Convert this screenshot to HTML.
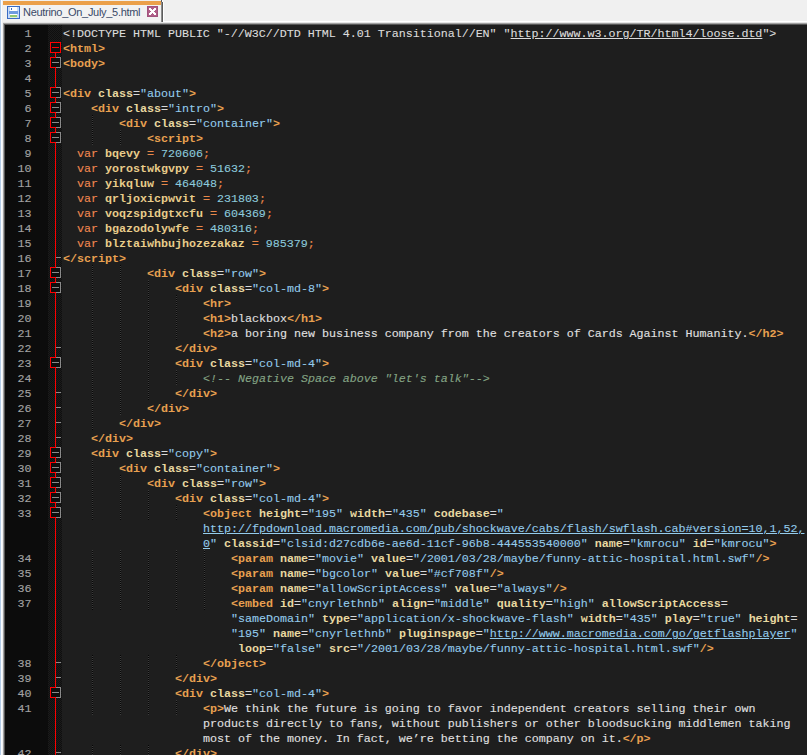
<!DOCTYPE html>
<html><head><meta charset="utf-8"><style>
html,body{margin:0;padding:0}
body{width:807px;height:755px;overflow:hidden;background:#f0f0f0;position:relative;font-family:"Liberation Sans",sans-serif}
.abs{position:absolute}
#ed{position:absolute;left:5px;top:25px;width:802px;height:730px;background:#1e1e1e}
#gut{position:absolute;left:5px;top:25px;width:43px;height:730px;background:#0c0c0c}
#nums{position:absolute;left:5px;top:27px;width:26.5px;-webkit-text-stroke:0.15px;text-align:right;font-family:"Liberation Mono",monospace;font-size:11.7px;letter-spacing:-0.02px;line-height:15px;color:#a2a2a2;white-space:pre}
#code{position:absolute;left:63px;top:27px;width:744px;-webkit-text-stroke:0.1px;font-family:"Liberation Mono",monospace;font-size:11.7px;letter-spacing:-0.02px;line-height:15px;color:#dcdcdc;white-space:pre}
#code div, #nums div{height:15px}
i{font-style:normal}
.dt{color:#dcdcdc}
.txt{color:#e0e0e0}
.tag{color:#e8a050;font-weight:bold;-webkit-text-stroke:0}
.attr{color:#e8d8a0;font-weight:bold;-webkit-text-stroke:0}
.eq{color:#d8d8d8}
.val{color:#94ccec}
.cmt{color:#84a484;font-style:italic}
.kw{color:#f08850}
.id{color:#e8cc8a;font-weight:bold;-webkit-text-stroke:0}
.op{color:#e8884a}
.num{color:#8ccadc}
.u{text-decoration:underline;text-underline-offset:1px}
</style></head><body>
<div class="abs" style="left:0;top:0;width:1px;height:755px;background:#b4cce8"></div>
<div class="abs" style="left:1px;top:0;width:1px;height:755px;background:#fafcff"></div>
<!-- tab -->
<div class="abs" style="left:3px;top:1px;width:158px;height:4px;background:#eba04a"></div>
<div class="abs" style="left:3px;top:5px;width:158px;height:17px;background:#f2f2f2"></div>
<div class="abs" style="left:161px;top:0px;width:1px;height:2px;background:#5a5a5a"></div>
<div class="abs" style="left:162px;top:0px;width:1px;height:2px;background:#ffffff"></div>
<div class="abs" style="left:161px;top:2px;width:1px;height:20px;background:#8c8c8c"></div>
<div class="abs" style="left:162px;top:2px;width:1px;height:20px;background:#5c5c5c"></div>
<div class="abs" style="left:163px;top:2px;width:1px;height:20px;background:#ffffff"></div>
<svg class="abs" style="left:7px;top:6px" width="13" height="13" shape-rendering="crispEdges">
<rect x="0" y="0" width="13" height="13" fill="#3a6cc4"/>
<rect x="1" y="1" width="11" height="11" fill="#c4daf8"/>
<rect x="3" y="1" width="7" height="4" fill="#ffffff"/>
<rect x="4" y="2" width="1" height="2" fill="#3a6cc4"/>
<rect x="2" y="5" width="9" height="3" fill="#6e9ce0"/>
<rect x="3" y="8" width="7" height="1" fill="#ffffff"/>
<rect x="3" y="9" width="7" height="2" fill="#92c872"/>
<rect x="3" y="11" width="7" height="1" fill="#e0f0d0"/>
</svg>
<div class="abs" style="left:23px;top:5px;font-size:11px;letter-spacing:-0.3px;color:#3a4a68;line-height:14px;white-space:pre">Neutrino_On_July_5.html</div>
<svg class="abs" style="left:147px;top:6px" width="11" height="11" shape-rendering="crispEdges"><rect width="11" height="11" fill="#a2527c"/><rect x="1" y="1" width="9" height="9" fill="#b05e88"/><rect x="2" y="2" width="1" height="1" fill="#ffffff"/><rect x="3" y="2" width="1" height="1" fill="#ffffff"/><rect x="7" y="2" width="1" height="1" fill="#ffffff"/><rect x="8" y="2" width="1" height="1" fill="#ffffff"/><rect x="2" y="3" width="1" height="1" fill="#ffffff"/><rect x="3" y="3" width="1" height="1" fill="#ffffff"/><rect x="4" y="3" width="1" height="1" fill="#ffffff"/><rect x="6" y="3" width="1" height="1" fill="#ffffff"/><rect x="7" y="3" width="1" height="1" fill="#ffffff"/><rect x="8" y="3" width="1" height="1" fill="#ffffff"/><rect x="3" y="4" width="1" height="1" fill="#ffffff"/><rect x="4" y="4" width="1" height="1" fill="#ffffff"/><rect x="5" y="4" width="1" height="1" fill="#ffffff"/><rect x="6" y="4" width="1" height="1" fill="#ffffff"/><rect x="7" y="4" width="1" height="1" fill="#ffffff"/><rect x="4" y="5" width="1" height="1" fill="#ffffff"/><rect x="5" y="5" width="1" height="1" fill="#ffffff"/><rect x="6" y="5" width="1" height="1" fill="#ffffff"/><rect x="3" y="6" width="1" height="1" fill="#ffffff"/><rect x="4" y="6" width="1" height="1" fill="#ffffff"/><rect x="5" y="6" width="1" height="1" fill="#ffffff"/><rect x="6" y="6" width="1" height="1" fill="#ffffff"/><rect x="7" y="6" width="1" height="1" fill="#ffffff"/><rect x="2" y="7" width="1" height="1" fill="#ffffff"/><rect x="3" y="7" width="1" height="1" fill="#ffffff"/><rect x="4" y="7" width="1" height="1" fill="#ffffff"/><rect x="6" y="7" width="1" height="1" fill="#ffffff"/><rect x="7" y="7" width="1" height="1" fill="#ffffff"/><rect x="8" y="7" width="1" height="1" fill="#ffffff"/><rect x="2" y="8" width="1" height="1" fill="#ffffff"/><rect x="3" y="8" width="1" height="1" fill="#ffffff"/><rect x="7" y="8" width="1" height="1" fill="#ffffff"/><rect x="8" y="8" width="1" height="1" fill="#ffffff"/></svg>
<!-- editor border -->
<div class="abs" style="left:164px;top:21px;width:643px;height:1px;background:#ffffff"></div>
<div class="abs" style="left:3px;top:22px;width:804px;height:1px;background:#e4e4e4"></div>
<div class="abs" style="left:3px;top:23px;width:804px;height:1px;background:#a0a0a0"></div>
<div class="abs" style="left:3px;top:23px;width:1px;height:732px;background:#a0a0a0"></div>
<div class="abs" style="left:4px;top:24px;width:803px;height:1px;background:#555555"></div>
<div class="abs" style="left:4px;top:24px;width:1px;height:731px;background:#555555"></div>
<div id="ed"></div>
<div id="gut"></div>
<svg width="14" height="730" style="position:absolute;left:48px;top:25px" shape-rendering="crispEdges"><defs><pattern id="ck" width="2" height="2" patternUnits="userSpaceOnUse"><rect width="2" height="2" fill="#0f0f0f"/><rect x="0" y="0" width="1" height="1" fill="#1b1b1b"/><rect x="1" y="1" width="1" height="1" fill="#1b1b1b"/></pattern></defs><rect width="14" height="730" fill="url(#ck)"/><rect x="7" y="28" width="1" height="702" fill="#ff0000"/><rect x="2" y="17" width="11" height="11" fill="#ff0000"/><rect x="3" y="18" width="9" height="9" fill="#0e0e0e"/><rect x="4" y="22" width="7" height="1" fill="#ff0000"/><rect x="2" y="32" width="11" height="11" fill="#8a8a8a"/><rect x="2" y="32" width="6" height="11" fill="#ff0000"/><rect x="3" y="33" width="9" height="9" fill="#0e0e0e"/><rect x="4" y="37" width="7" height="1" fill="#8a8a8a"/><rect x="2" y="62" width="11" height="11" fill="#8a8a8a"/><rect x="2" y="62" width="6" height="11" fill="#ff0000"/><rect x="3" y="63" width="9" height="9" fill="#0e0e0e"/><rect x="4" y="67" width="7" height="1" fill="#8a8a8a"/><rect x="2" y="77" width="11" height="11" fill="#8a8a8a"/><rect x="2" y="77" width="6" height="11" fill="#ff0000"/><rect x="3" y="78" width="9" height="9" fill="#0e0e0e"/><rect x="4" y="82" width="7" height="1" fill="#8a8a8a"/><rect x="2" y="92" width="11" height="11" fill="#8a8a8a"/><rect x="2" y="92" width="6" height="11" fill="#ff0000"/><rect x="3" y="93" width="9" height="9" fill="#0e0e0e"/><rect x="4" y="97" width="7" height="1" fill="#8a8a8a"/><rect x="2" y="107" width="11" height="11" fill="#8a8a8a"/><rect x="2" y="107" width="6" height="11" fill="#ff0000"/><rect x="3" y="108" width="9" height="9" fill="#0e0e0e"/><rect x="4" y="112" width="7" height="1" fill="#8a8a8a"/><rect x="2" y="242" width="11" height="11" fill="#8a8a8a"/><rect x="2" y="242" width="6" height="11" fill="#ff0000"/><rect x="3" y="243" width="9" height="9" fill="#0e0e0e"/><rect x="4" y="247" width="7" height="1" fill="#8a8a8a"/><rect x="2" y="257" width="11" height="11" fill="#8a8a8a"/><rect x="2" y="257" width="6" height="11" fill="#ff0000"/><rect x="3" y="258" width="9" height="9" fill="#0e0e0e"/><rect x="4" y="262" width="7" height="1" fill="#8a8a8a"/><rect x="2" y="332" width="11" height="11" fill="#8a8a8a"/><rect x="2" y="332" width="6" height="11" fill="#ff0000"/><rect x="3" y="333" width="9" height="9" fill="#0e0e0e"/><rect x="4" y="337" width="7" height="1" fill="#8a8a8a"/><rect x="2" y="422" width="11" height="11" fill="#8a8a8a"/><rect x="2" y="422" width="6" height="11" fill="#ff0000"/><rect x="3" y="423" width="9" height="9" fill="#0e0e0e"/><rect x="4" y="427" width="7" height="1" fill="#8a8a8a"/><rect x="2" y="437" width="11" height="11" fill="#8a8a8a"/><rect x="2" y="437" width="6" height="11" fill="#ff0000"/><rect x="3" y="438" width="9" height="9" fill="#0e0e0e"/><rect x="4" y="442" width="7" height="1" fill="#8a8a8a"/><rect x="2" y="452" width="11" height="11" fill="#8a8a8a"/><rect x="2" y="452" width="6" height="11" fill="#ff0000"/><rect x="3" y="453" width="9" height="9" fill="#0e0e0e"/><rect x="4" y="457" width="7" height="1" fill="#8a8a8a"/><rect x="2" y="467" width="11" height="11" fill="#8a8a8a"/><rect x="2" y="467" width="6" height="11" fill="#ff0000"/><rect x="3" y="468" width="9" height="9" fill="#0e0e0e"/><rect x="4" y="472" width="7" height="1" fill="#8a8a8a"/><rect x="2" y="482" width="11" height="11" fill="#8a8a8a"/><rect x="2" y="482" width="6" height="11" fill="#ff0000"/><rect x="3" y="483" width="9" height="9" fill="#0e0e0e"/><rect x="4" y="487" width="7" height="1" fill="#8a8a8a"/><rect x="2" y="662" width="11" height="11" fill="#8a8a8a"/><rect x="2" y="662" width="6" height="11" fill="#ff0000"/><rect x="3" y="663" width="9" height="9" fill="#0e0e0e"/><rect x="4" y="667" width="7" height="1" fill="#8a8a8a"/><rect x="8" y="637" width="5" height="1" fill="#8a8a8a"/><rect x="8" y="652" width="5" height="1" fill="#8a8a8a"/><rect x="8" y="232" width="5" height="1" fill="#8a8a8a"/><rect x="8" y="727" width="5" height="1" fill="#8a8a8a"/><rect x="8" y="322" width="5" height="1" fill="#8a8a8a"/><rect x="8" y="367" width="5" height="1" fill="#8a8a8a"/><rect x="8" y="382" width="5" height="1" fill="#8a8a8a"/><rect x="8" y="397" width="5" height="1" fill="#8a8a8a"/><rect x="8" y="412" width="5" height="1" fill="#8a8a8a"/></svg>
<svg width="744" height="730" style="position:absolute;left:63px;top:25px" shape-rendering="crispEdges"><defs><pattern id="dg" width="1" height="2" patternUnits="userSpaceOnUse"><rect width="1" height="2" fill="#3c3c3c"/><rect width="1" height="1" fill="#050505"/></pattern></defs><rect x="29" y="90" width="1" height="15" fill="url(#dg)"/><rect x="29" y="105" width="1" height="15" fill="url(#dg)"/><rect x="57" y="105" width="1" height="15" fill="url(#dg)"/><rect x="29" y="240" width="1" height="15" fill="url(#dg)"/><rect x="57" y="240" width="1" height="15" fill="url(#dg)"/><rect x="29" y="255" width="1" height="15" fill="url(#dg)"/><rect x="57" y="255" width="1" height="15" fill="url(#dg)"/><rect x="85" y="255" width="1" height="15" fill="url(#dg)"/><rect x="29" y="270" width="1" height="15" fill="url(#dg)"/><rect x="57" y="270" width="1" height="15" fill="url(#dg)"/><rect x="85" y="270" width="1" height="15" fill="url(#dg)"/><rect x="113" y="270" width="1" height="15" fill="url(#dg)"/><rect x="29" y="285" width="1" height="15" fill="url(#dg)"/><rect x="57" y="285" width="1" height="15" fill="url(#dg)"/><rect x="85" y="285" width="1" height="15" fill="url(#dg)"/><rect x="113" y="285" width="1" height="15" fill="url(#dg)"/><rect x="29" y="300" width="1" height="15" fill="url(#dg)"/><rect x="57" y="300" width="1" height="15" fill="url(#dg)"/><rect x="85" y="300" width="1" height="15" fill="url(#dg)"/><rect x="113" y="300" width="1" height="15" fill="url(#dg)"/><rect x="29" y="315" width="1" height="15" fill="url(#dg)"/><rect x="57" y="315" width="1" height="15" fill="url(#dg)"/><rect x="85" y="315" width="1" height="15" fill="url(#dg)"/><rect x="29" y="330" width="1" height="15" fill="url(#dg)"/><rect x="57" y="330" width="1" height="15" fill="url(#dg)"/><rect x="85" y="330" width="1" height="15" fill="url(#dg)"/><rect x="29" y="345" width="1" height="15" fill="url(#dg)"/><rect x="57" y="345" width="1" height="15" fill="url(#dg)"/><rect x="85" y="345" width="1" height="15" fill="url(#dg)"/><rect x="113" y="345" width="1" height="15" fill="url(#dg)"/><rect x="29" y="360" width="1" height="15" fill="url(#dg)"/><rect x="57" y="360" width="1" height="15" fill="url(#dg)"/><rect x="85" y="360" width="1" height="15" fill="url(#dg)"/><rect x="29" y="375" width="1" height="15" fill="url(#dg)"/><rect x="57" y="375" width="1" height="15" fill="url(#dg)"/><rect x="29" y="390" width="1" height="15" fill="url(#dg)"/><rect x="29" y="435" width="1" height="15" fill="url(#dg)"/><rect x="29" y="450" width="1" height="15" fill="url(#dg)"/><rect x="57" y="450" width="1" height="15" fill="url(#dg)"/><rect x="29" y="465" width="1" height="15" fill="url(#dg)"/><rect x="57" y="465" width="1" height="15" fill="url(#dg)"/><rect x="85" y="465" width="1" height="15" fill="url(#dg)"/><rect x="29" y="480" width="1" height="15" fill="url(#dg)"/><rect x="57" y="480" width="1" height="15" fill="url(#dg)"/><rect x="85" y="480" width="1" height="15" fill="url(#dg)"/><rect x="113" y="480" width="1" height="15" fill="url(#dg)"/><rect x="29" y="525" width="1" height="15" fill="url(#dg)"/><rect x="57" y="525" width="1" height="15" fill="url(#dg)"/><rect x="85" y="525" width="1" height="15" fill="url(#dg)"/><rect x="113" y="525" width="1" height="15" fill="url(#dg)"/><rect x="141" y="525" width="1" height="15" fill="url(#dg)"/><rect x="29" y="540" width="1" height="15" fill="url(#dg)"/><rect x="57" y="540" width="1" height="15" fill="url(#dg)"/><rect x="85" y="540" width="1" height="15" fill="url(#dg)"/><rect x="113" y="540" width="1" height="15" fill="url(#dg)"/><rect x="141" y="540" width="1" height="15" fill="url(#dg)"/><rect x="29" y="555" width="1" height="15" fill="url(#dg)"/><rect x="57" y="555" width="1" height="15" fill="url(#dg)"/><rect x="85" y="555" width="1" height="15" fill="url(#dg)"/><rect x="113" y="555" width="1" height="15" fill="url(#dg)"/><rect x="141" y="555" width="1" height="15" fill="url(#dg)"/><rect x="29" y="570" width="1" height="15" fill="url(#dg)"/><rect x="57" y="570" width="1" height="15" fill="url(#dg)"/><rect x="85" y="570" width="1" height="15" fill="url(#dg)"/><rect x="113" y="570" width="1" height="15" fill="url(#dg)"/><rect x="141" y="570" width="1" height="15" fill="url(#dg)"/><rect x="29" y="630" width="1" height="15" fill="url(#dg)"/><rect x="57" y="630" width="1" height="15" fill="url(#dg)"/><rect x="85" y="630" width="1" height="15" fill="url(#dg)"/><rect x="113" y="630" width="1" height="15" fill="url(#dg)"/><rect x="29" y="645" width="1" height="15" fill="url(#dg)"/><rect x="57" y="645" width="1" height="15" fill="url(#dg)"/><rect x="85" y="645" width="1" height="15" fill="url(#dg)"/><rect x="29" y="660" width="1" height="15" fill="url(#dg)"/><rect x="57" y="660" width="1" height="15" fill="url(#dg)"/><rect x="85" y="660" width="1" height="15" fill="url(#dg)"/><rect x="29" y="675" width="1" height="15" fill="url(#dg)"/><rect x="57" y="675" width="1" height="15" fill="url(#dg)"/><rect x="85" y="675" width="1" height="15" fill="url(#dg)"/><rect x="113" y="675" width="1" height="15" fill="url(#dg)"/><rect x="29" y="720" width="1" height="15" fill="url(#dg)"/><rect x="57" y="720" width="1" height="15" fill="url(#dg)"/><rect x="85" y="720" width="1" height="15" fill="url(#dg)"/></svg>
<div id="nums"><div>1</div><div>2</div><div>3</div><div>4</div><div>5</div><div>6</div><div>7</div><div>8</div><div>9</div><div>10</div><div>11</div><div>12</div><div>13</div><div>14</div><div>15</div><div>16</div><div>17</div><div>18</div><div>19</div><div>20</div><div>21</div><div>22</div><div>23</div><div>24</div><div>25</div><div>26</div><div>27</div><div>28</div><div>29</div><div>30</div><div>31</div><div>32</div><div>33</div><div>&nbsp;</div><div>&nbsp;</div><div>34</div><div>35</div><div>36</div><div>37</div><div>&nbsp;</div><div>&nbsp;</div><div>&nbsp;</div><div>38</div><div>39</div><div>40</div><div>41</div><div>&nbsp;</div><div>&nbsp;</div><div>42</div></div>
<div id="code"><div style="padding-left:0px"><i class="dt">&lt;!DOCTYPE HTML PUBLIC "-//W3C//DTD HTML 4.01 Transitional//EN" "</i><i class="dt u">http://www.w3.org/TR/html4/loose.dtd</i><i class="dt">"&gt;</i></div><div style="padding-left:0px"><i class="tag">&lt;html&gt;</i></div><div style="padding-left:0px"><i class="tag">&lt;body&gt;</i></div><div style="padding-left:0px">&nbsp;</div><div style="padding-left:0px"><i class="tag">&lt;div</i> <i class="attr">class</i><i class="eq">=</i><i class="val">"about"</i><i class="tag">&gt;</i></div><div style="padding-left:28px"><i class="tag">&lt;div</i> <i class="attr">class</i><i class="eq">=</i><i class="val">"intro"</i><i class="tag">&gt;</i></div><div style="padding-left:56px"><i class="tag">&lt;div</i> <i class="attr">class</i><i class="eq">=</i><i class="val">"container"</i><i class="tag">&gt;</i></div><div style="padding-left:84px"><i class="tag">&lt;script&gt;</i></div><div style="padding-left:14px"><i class="kw">var</i> <i class="id">bqevy</i> <i class="op">=</i> <i class="num">720606</i><i class="op">;</i></div><div style="padding-left:14px"><i class="kw">var</i> <i class="id">yorostwkgvpy</i> <i class="op">=</i> <i class="num">51632</i><i class="op">;</i></div><div style="padding-left:14px"><i class="kw">var</i> <i class="id">yikqluw</i> <i class="op">=</i> <i class="num">464048</i><i class="op">;</i></div><div style="padding-left:14px"><i class="kw">var</i> <i class="id">qrljoxicpwvit</i> <i class="op">=</i> <i class="num">231803</i><i class="op">;</i></div><div style="padding-left:14px"><i class="kw">var</i> <i class="id">voqzspidgtxcfu</i> <i class="op">=</i> <i class="num">604369</i><i class="op">;</i></div><div style="padding-left:14px"><i class="kw">var</i> <i class="id">bgazodolywfe</i> <i class="op">=</i> <i class="num">480316</i><i class="op">;</i></div><div style="padding-left:14px"><i class="kw">var</i> <i class="id">blztaiwhbujhozezakaz</i> <i class="op">=</i> <i class="num">985379</i><i class="op">;</i></div><div style="padding-left:0px"><i class="tag">&lt;/script&gt;</i></div><div style="padding-left:84px"><i class="tag">&lt;div</i> <i class="attr">class</i><i class="eq">=</i><i class="val">"row"</i><i class="tag">&gt;</i></div><div style="padding-left:112px"><i class="tag">&lt;div</i> <i class="attr">class</i><i class="eq">=</i><i class="val">"col-md-8"</i><i class="tag">&gt;</i></div><div style="padding-left:140px"><i class="tag">&lt;hr&gt;</i></div><div style="padding-left:140px"><i class="tag">&lt;h1&gt;</i><i class="txt">blackbox</i><i class="tag">&lt;/h1&gt;</i></div><div style="padding-left:140px"><i class="tag">&lt;h2&gt;</i><i class="txt">a boring new business company from the creators of Cards Against Humanity.</i><i class="tag">&lt;/h2&gt;</i></div><div style="padding-left:112px"><i class="tag">&lt;/div&gt;</i></div><div style="padding-left:112px"><i class="tag">&lt;div</i> <i class="attr">class</i><i class="eq">=</i><i class="val">"col-md-4"</i><i class="tag">&gt;</i></div><div style="padding-left:140px"><i class="cmt">&lt;!-- Negative Space above "let's talk"--&gt;</i></div><div style="padding-left:112px"><i class="tag">&lt;/div&gt;</i></div><div style="padding-left:84px"><i class="tag">&lt;/div&gt;</i></div><div style="padding-left:56px"><i class="tag">&lt;/div&gt;</i></div><div style="padding-left:28px"><i class="tag">&lt;/div&gt;</i></div><div style="padding-left:28px"><i class="tag">&lt;div</i> <i class="attr">class</i><i class="eq">=</i><i class="val">"copy"</i><i class="tag">&gt;</i></div><div style="padding-left:56px"><i class="tag">&lt;div</i> <i class="attr">class</i><i class="eq">=</i><i class="val">"container"</i><i class="tag">&gt;</i></div><div style="padding-left:84px"><i class="tag">&lt;div</i> <i class="attr">class</i><i class="eq">=</i><i class="val">"row"</i><i class="tag">&gt;</i></div><div style="padding-left:112px"><i class="tag">&lt;div</i> <i class="attr">class</i><i class="eq">=</i><i class="val">"col-md-4"</i><i class="tag">&gt;</i></div><div style="padding-left:140px"><i class="tag">&lt;object</i> <i class="attr">height</i><i class="eq">=</i><i class="val">"195"</i> <i class="attr">width</i><i class="eq">=</i><i class="val">"435"</i> <i class="attr">codebase</i><i class="eq">=</i><i class="val">"</i></div><div style="padding-left:140px"><i class="val u">http://fpdownload.macromedia.com/pub/shockwave/cabs/flash/swflash.cab#version=10,1,52,</i></div><div style="padding-left:140px"><i class="val u">0</i><i class="val">"</i> <i class="attr">classid</i><i class="eq">=</i><i class="val">"clsid:d27cdb6e-ae6d-11cf-96b8-444553540000"</i> <i class="attr">name</i><i class="eq">=</i><i class="val">"kmrocu"</i> <i class="attr">id</i><i class="eq">=</i><i class="val">"kmrocu"</i><i class="tag">&gt;</i></div><div style="padding-left:168px"><i class="tag">&lt;param</i> <i class="attr">name</i><i class="eq">=</i><i class="val">"movie"</i> <i class="attr">value</i><i class="eq">=</i><i class="val">"/2001/03/28/maybe/funny-attic-hospital.html.swf"</i><i class="tag">/&gt;</i></div><div style="padding-left:168px"><i class="tag">&lt;param</i> <i class="attr">name</i><i class="eq">=</i><i class="val">"bgcolor"</i> <i class="attr">value</i><i class="eq">=</i><i class="val">"#cf708f"</i><i class="tag">/&gt;</i></div><div style="padding-left:168px"><i class="tag">&lt;param</i> <i class="attr">name</i><i class="eq">=</i><i class="val">"allowScriptAccess"</i> <i class="attr">value</i><i class="eq">=</i><i class="val">"always"</i><i class="tag">/&gt;</i></div><div style="padding-left:168px"><i class="tag">&lt;embed</i> <i class="attr">id</i><i class="eq">=</i><i class="val">"cnyrlethnb"</i> <i class="attr">align</i><i class="eq">=</i><i class="val">"middle"</i> <i class="attr">quality</i><i class="eq">=</i><i class="val">"high"</i> <i class="attr">allowScriptAccess</i><i class="eq">=</i></div><div style="padding-left:168px"><i class="val">"sameDomain"</i> <i class="attr">type</i><i class="eq">=</i><i class="val">"application/x-shockwave-flash"</i> <i class="attr">width</i><i class="eq">=</i><i class="val">"435"</i> <i class="attr">play</i><i class="eq">=</i><i class="val">"true"</i> <i class="attr">height</i><i class="eq">=</i></div><div style="padding-left:168px"><i class="val">"195"</i> <i class="attr">name</i><i class="eq">=</i><i class="val">"cnyrlethnb"</i> <i class="attr">pluginspage</i><i class="eq">=</i><i class="val">"</i><i class="val u">http://www.macromedia.com/go/getflashplayer</i><i class="val">"</i></div><div style="padding-left:168px"> <i class="attr">loop</i><i class="eq">=</i><i class="val">"false"</i> <i class="attr">src</i><i class="eq">=</i><i class="val">"/2001/03/28/maybe/funny-attic-hospital.html.swf"</i><i class="tag">/&gt;</i></div><div style="padding-left:140px"><i class="tag">&lt;/object&gt;</i></div><div style="padding-left:112px"><i class="tag">&lt;/div&gt;</i></div><div style="padding-left:112px"><i class="tag">&lt;div</i> <i class="attr">class</i><i class="eq">=</i><i class="val">"col-md-4"</i><i class="tag">&gt;</i></div><div style="padding-left:140px"><i class="tag">&lt;p&gt;</i><i class="txt">We think the future is going to favor independent creators selling their own</i></div><div style="padding-left:140px"><i class="txt">products directly to fans, without publishers or other bloodsucking middlemen taking</i></div><div style="padding-left:140px"><i class="txt">most of the money. In fact, we’re betting the company on it.</i><i class="tag">&lt;/p&gt;</i></div><div style="padding-left:112px"><i class="tag">&lt;/div&gt;</i></div></div>
</body></html>
